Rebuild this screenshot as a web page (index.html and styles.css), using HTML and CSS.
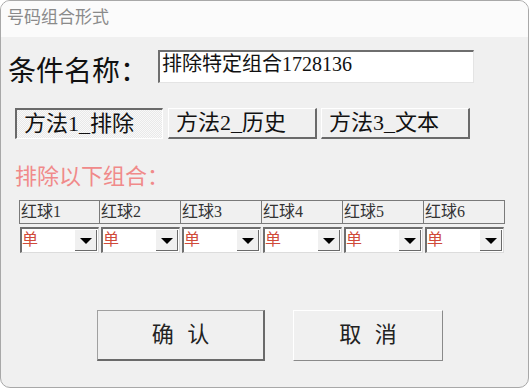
FILE: index.html
```html
<!DOCTYPE html>
<html lang="zh">
<head>
<meta charset="UTF-8">
<title>号码组合形式</title>
<link rel="stylesheet" href="styles.css">
</head>
<body>
  <div class="window">
    <div class="titlebar">号码组合形式</div>
    <div class="content">
      <div class="name-row">
        <span class="name-label">条件名称：</span>
        <div class="name-input">排除特定组合1728136</div>
      </div>

      <div class="tabs">
        <div class="tab tab-pressed">方法1_排除</div>
        <div class="tab tab-2">方法2_历史</div>
        <div class="tab tab-3">方法3_文本</div>
      </div>

      <div class="section-title">排除以下组合：</div>

      <div class="grid">
        <div class="head">红球1</div>
        <div class="head">红球2</div>
        <div class="head">红球3</div>
        <div class="head">红球4</div>
        <div class="head">红球5</div>
        <div class="head">红球6</div>
      </div>
      <div class="grid selects">
        <div class="combo"><span class="combo-val">单</span><span class="combo-btn"></span></div>
        <div class="combo"><span class="combo-val">单</span><span class="combo-btn"></span></div>
        <div class="combo"><span class="combo-val">单</span><span class="combo-btn"></span></div>
        <div class="combo"><span class="combo-val">单</span><span class="combo-btn"></span></div>
        <div class="combo"><span class="combo-val">单</span><span class="combo-btn"></span></div>
        <div class="combo"><span class="combo-val">单</span><span class="combo-btn"></span></div>
      </div>

      <div class="actions">
        <div class="btn btn-ok">确 认</div>
        <div class="btn btn-cancel">取 消</div>
      </div>
    </div>
  </div>
</body>
</html>
```

FILE: styles.css
```css
body {
  margin: 0;
  padding: 0;
  background-color: #ffffff;
  font-family: "Liberation Serif", "Noto Sans CJK SC", serif;
  color: #000000;
}

.window {
  box-sizing: border-box;
  width: 529px;
  height: 388px;
  border: 1px solid #a8a8a8;
  border-radius: 10px;
  background-color: #f0f0f0;
  overflow: hidden;
}

.titlebar {
  height: 36px;
  background-color: #fbfbfb; /* near white title */
  color: #8a8a8a;
  font-size: 17px;
  line-height: 34px;
  padding-left: 6px;
}

.name-row {
  display: flex;
  align-items: flex-start;
  margin-top: 13px;
}

.name-label {
  width: 150px;
  padding-left: 7px;
  font-size: 28px;
  line-height: 32px;
  margin-top: 6px;
  color: #111111;
}

.name-input {
  box-sizing: border-box;
  width: 316px;
  height: 33px;
  background-color: #ffffff;
  border-top: 2px solid #6e6e6e;
  border-left: 2px solid #6e6e6e;
  border-right: 1px solid #e4e4e4;
  border-bottom: 1px solid #e4e4e4;
  font-size: 20px;
  line-height: 24px;
  padding-left: 2px;
  color: #111111;
}

.tabs {
  display: flex;
  margin-top: 20px;
  padding-left: 14px;
}

.tab {
  box-sizing: border-box;
  width: 149px;
  height: 31px;
  font-size: 22px;
  line-height: 27px;
  padding-left: 7px;
  border-top: 1px solid #ffffff;
  border-left: 1px solid #ffffff;
  border-right: 2px solid #6a6a6a;
  border-bottom: 2px solid #6a6a6a;
  background-color: #f0f0f0;
  color: #111111;
}

.tab-pressed {
  width: 148px;
  border-top: 2px solid #6a6a6a;
  border-left: 2px solid #6a6a6a;
  border-right: 1px solid #ffffff;
  border-bottom: 1px solid #ffffff;
  background-color: #f7f7f7;
  background-image: repeating-conic-gradient(#f9f9f9 0 25%, #e9e9e9 0 50%);
  background-size: 2px 2px;
}

.tab-2 {
  margin-left: 5px;
}

.tab-3 {
  margin-left: 4px;
}

.section-title {
  margin-top: 23px;
  padding-left: 14px;
  font-size: 22px;
  line-height: 30px;
  color: #f08a8a;
}

.grid {
  display: flex;
  margin-left: 18px;
  margin-top: 8px;
}

.head {
  box-sizing: border-box;
  width: 81px;
  height: 24px;
  border: 1px solid #7a7a7a;
  font-size: 16px;
  line-height: 21px;
  padding-left: 1px;
  color: #333333;
}

.head + .head {
  border-left: none;
}

.selects {
  margin-top: 3px;
  margin-left: 19px;
}

.combo {
  box-sizing: border-box;
  display: flex;
  width: 79px;
  height: 26px;
  margin-right: 2px;
  background-color: #ffffff;
  border-top: 2px solid #6e6e6e;
  border-left: 2px solid #6e6e6e;
  border-right: 1px solid #dcdcdc;
  border-bottom: 1px solid #dcdcdc;
}

.combo-val {
  flex: 1;
  font-size: 16px;
  line-height: 21px;
  color: #d04a3a;
}

.combo-btn {
  box-sizing: border-box;
  width: 22px;
  height: 21px;
  margin-top: 1px;
  margin-right: 1px;
  background-color: #f0f0f0;
  border-right: 1px solid #6a6a6a;
  border-bottom: 1px solid #6a6a6a;
  position: relative;
}

.combo-btn::after {
  content: "";
  position: absolute;
  left: 5px;
  top: 8px;
  border-left: 6px solid transparent;
  border-right: 6px solid transparent;
  border-top: 6px solid #000000;
}

.actions {
  display: flex;
  margin-top: 57px;
  padding-left: 96px;
}

.btn {
  box-sizing: border-box;
  height: 51px;
  font-size: 22px;
  line-height: 47px;
  text-align: center;
  letter-spacing: 4px;
  color: #222222;
  background-color: #f0f0f0;
  border-top: 1px solid #a0a0a0;
  border-left: 1px solid #a0a0a0;
  border-right: 2px solid #6a6a6a;
  border-bottom: 2px solid #6a6a6a;
}

.btn-ok {
  width: 168px;
  padding-left: 4px;
}

.btn-cancel {
  width: 150px;
  margin-left: 28px;
  padding-left: 4px;
  border-top: 1px solid #ffffff;
  border-left: 1px solid #ffffff;
  border-right: 1px solid #8a8a8a;
  border-bottom: 1px solid #8a8a8a;
}
```
